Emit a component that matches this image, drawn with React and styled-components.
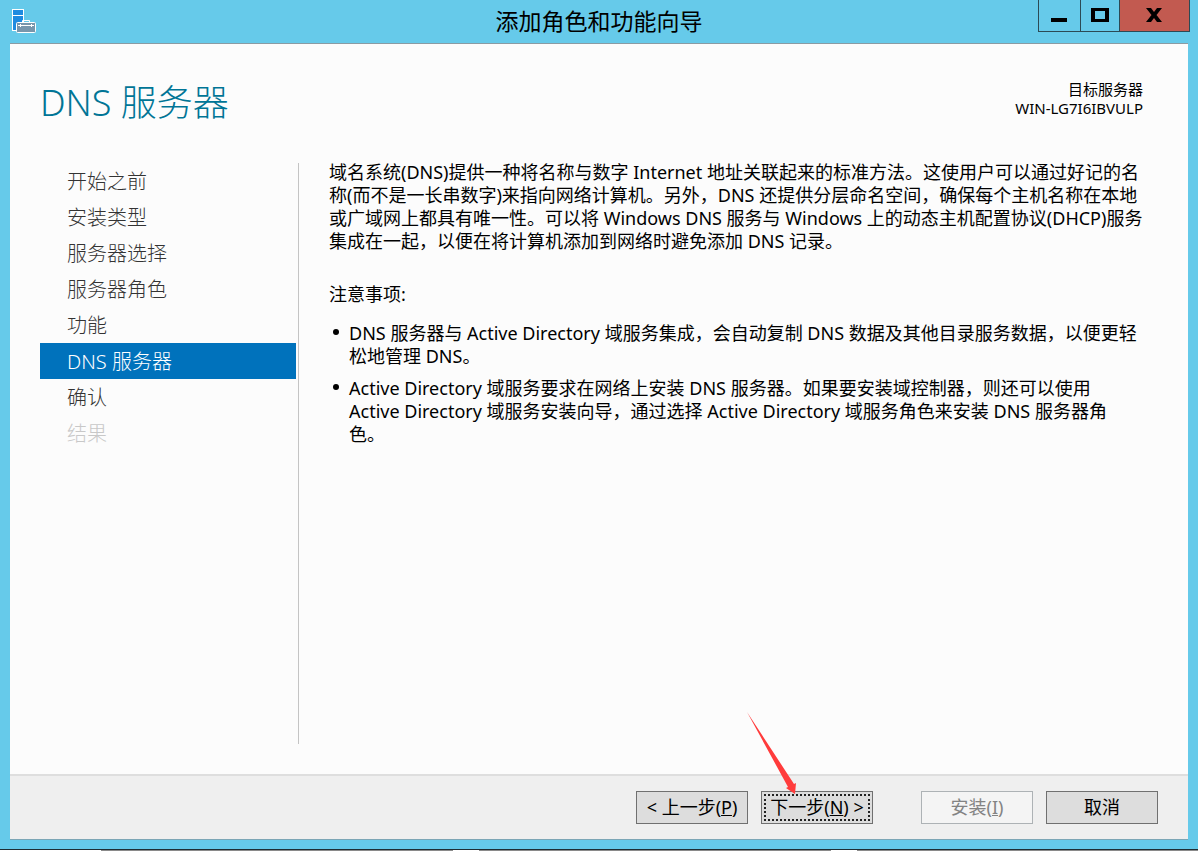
import React from "react";
import styled, { createGlobalStyle, css } from "styled-components";

const GlobalStyle = createGlobalStyle`
  * { box-sizing: border-box; }
  html, body, #root { height: 100%; margin: 0; }
  body {
    overflow: hidden;
    color: #000;
    font-family: "Noto Sans", "Noto Sans CJK SC", sans-serif;
    font-size: 18px;
  }
  button { font-family: inherit; }
  h1, h2, p, ul, ol { margin: 0; padding: 0; font-weight: 400; }
`;

const Desktop = styled.div`
  display: flex;
  flex-direction: column;
  height: 100vh;
`;

const Window = styled.div`
  flex: 1;
  min-height: 0;
  display: flex;
  flex-direction: column;
  padding: 0 10px 9px;
  background: #66caea;
  border-bottom: 1px solid #1e2d33;
`;

const TaskStrip = styled.div`
  display: flex;
  height: 2px;
  background: #fff;
`;

const StripPiece = styled.span`
  flex: ${(p) => p.$grow} 1 0;
  height: 1px;
  background: ${(p) => (p.$dark ? "#8a8a8a" : "#fff")};
`;

const TitleBar = styled.header`
  display: grid;
  grid-template-columns: 1fr auto 1fr;
  align-items: start;
  height: 43px;
`;

const AppIcon = styled.svg`
  width: 26px;
  height: 26px;
  margin-top: 8px;
`;

const Title = styled.h1`
  font-size: 23px;
  line-height: 42px;
`;

const Controls = styled.div`
  display: flex;
  justify-self: end;
  margin-right: -2px;
  border: 1px solid #2b4a55;
  border-top: 0;
`;

const ControlButton = styled.button`
  display: flex;
  align-items: center;
  justify-content: center;
  width: ${(p) => p.$width}px;
  height: 31px;
  padding: 0 1px 1px 0;
  border: 0;
  background: ${(p) => (p.$close ? "#c25a50" : "transparent")};
  & + & { border-left: 1px solid #2b4a55; }
`;

const Panel = styled.main`
  flex: 1;
  min-height: 0;
  display: flex;
  flex-direction: column;
  background: #fcfcfc;
  border-top: 1px solid #8a9ba3;
  border-bottom: 1px solid #7ba6b6;
`;

const PageHeader = styled.div`
  display: flex;
  justify-content: space-between;
  height: 117px;
  padding: 30px 45px 0 30px;
`;

const PageTitle = styled.h2`
  font-size: 36px;
  line-height: 58px;
  font-weight: 300;
  color: #007596;
`;

const Target = styled.p`
  padding-top: 6px;
  font-size: 15px;
  line-height: 19px;
  text-align: right;
`;

const Body = styled.div`
  flex: 1;
  min-height: 0;
  display: flex;
  padding: 0 30px;
`;

const Steps = styled.nav`
  width: 259px;
  margin: 2px 0 30px;
  padding-right: 2px;
  border-right: 1px solid #c4c4c4;
`;

const StepList = styled.ol`
  list-style: none;
`;

const Step = styled.li`
  height: 36px;
  padding-left: 27px;
  font-size: 20px;
  line-height: 38px;
  font-weight: 300;
  color: #333;
  ${(p) => p.$active && css`color: #fff; background: #0072bc;`}
  ${(p) => p.$disabled && css`color: #c8c8c8;`}
`;

const Content = styled.section`
  flex: 1;
  min-width: 0;
  padding-left: 30px;
  line-height: 23px;
`;

const Line = styled.span`
  display: block;
  white-space: nowrap;
`;

const NoteTitle = styled.p`
  margin: 30px 0 16px;
`;

const Notes = styled.ul`
  list-style: none;
`;

const Note = styled.li`
  display: flex;
  margin-bottom: 9px;
  &::before {
    content: "";
    flex: none;
    width: 6px;
    height: 6px;
    margin: 7px 10px 0 4px;
    border-radius: 50%;
    background: #000;
  }
`;

const Footer = styled.footer`
  display: flex;
  justify-content: flex-end;
  gap: 13px;
  height: 65px;
  padding: 15px 30px 0;
  background: #efefef;
  border-top: 2px solid #dedede;
`;

const Button = styled.button`
  width: 112px;
  height: 33px;
  padding: 0;
  border: 1px solid #707070;
  background: #ddd;
  color: #000;
  font-size: 18px;
  line-height: 31px;
  white-space: nowrap;
  ${(p) => p.$gap && css`margin-left: 35px;`}
  ${(p) => p.$focused && css`
    outline: 2px dotted #222;
    outline-offset: -5px;
  `}
  &:disabled {
    color: #838383;
    background: #f4f4f4;
    border-color: #adb2b5;
  }
`;

const Arrow = styled.svg`
  position: absolute;
  right: 401px;
  bottom: 58px;
  width: 52px;
  height: 84px;
  pointer-events: none;
`;

const steps = ["开始之前", "安装类型", "服务器选择", "服务器角色", "功能", "DNS 服务器", "确认", "结果"];

const intro = [
  "域名系统(DNS)提供一种将名称与数字 Internet 地址关联起来的标准方法。这使用户可以通过好记的名",
  "称(而不是一长串数字)来指向网络计算机。另外，DNS 还提供分层命名空间，确保每个主机名称在本地",
  "或广域网上都具有唯一性。可以将 Windows DNS 服务与 Windows 上的动态主机配置协议(DHCP)服务",
  "集成在一起，以便在将计算机添加到网络时避免添加 DNS 记录。",
];

const notes = [
  [
    "DNS 服务器与 Active Directory 域服务集成，会自动复制 DNS 数据及其他目录服务数据，以便更轻",
    "松地管理 DNS。",
  ],
  [
    "Active Directory 域服务要求在网络上安装 DNS 服务器。如果要安装域控制器，则还可以使用",
    "Active Directory 域服务安装向导，通过选择 Active Directory 域服务角色来安装 DNS 服务器角",
    "色。",
  ],
];

const Lines = ({ lines }) => lines.map((line) => <Line key={line}>{line}</Line>);

export default function App() {
  return (
    <Desktop lang="zh-CN">
      <GlobalStyle />
      <Window>
        <TitleBar>
          <AppIcon viewBox="0 0 26 26" aria-hidden="true">
            <rect x="2.5" y="1.5" width="11" height="21" fill="#1f8be0" stroke="#fff" />
            <path d="M2 7.500H14" stroke="#fff" />
            <path d="M12.500 14V12.500H19.500V14" fill="none" stroke="#fff" />
            <rect x="6.500" y="14.500" width="19" height="10" rx="1" fill="#7896ac" stroke="#fff" />
            <path d="M8 17.500H24M10.500 16V19M21.500 16V19" stroke="#fff" />
          </AppIcon>
          <Title>添加角色和功能向导</Title>
          <Controls>
            <ControlButton $width={41} aria-label="最小化">
              <svg width="16" height="14" shapeRendering="crispEdges"><rect y="10" width="16" height="4" /></svg>
            </ControlButton>
            <ControlButton $width={39} aria-label="最大化">
              <svg width="18" height="14" shapeRendering="crispEdges"><path fillRule="evenodd" d="M0 0H18V14H0ZM4 3V11H14V3Z" /></svg>
            </ControlButton>
            <ControlButton $width={70} $close aria-label="关闭">
              <svg width="16" height="14"><path d="M0 0H5L8 4L11 0H16L10.500 7L16 14H11L8 10L5 14H0L5.500 7Z" /></svg>
            </ControlButton>
          </Controls>
        </TitleBar>
        <Panel>
          <PageHeader>
            <PageTitle>DNS 服务器</PageTitle>
            <Target>目标服务器<br />WIN-LG7I6IBVULP</Target>
          </PageHeader>
          <Body>
            <Steps aria-label="向导步骤">
              <StepList>
                {steps.map((s, i) => (
                  <Step key={s} $active={i === 5} $disabled={i === 7} aria-current={i === 5 ? "step" : undefined}>{s}</Step>
                ))}
              </StepList>
            </Steps>
            <Content>
              <p><Lines lines={intro} /></p>
              <NoteTitle>注意事项:</NoteTitle>
              <Notes>
                {notes.map((n) => (
                  <Note key={n[0]}><div><Lines lines={n} /></div></Note>
                ))}
              </Notes>
            </Content>
          </Body>
          <Footer>
            <Button>&lt; 上一步(<u>P</u>)</Button>
            <Button $focused>下一步(<u>N</u>) &gt;</Button>
            <Button $gap disabled>安装(<u>I</u>)</Button>
            <Button>取消</Button>
          </Footer>
        </Panel>
      </Window>
      <TaskStrip>
        <StripPiece $grow={101} />
        <StripPiece $grow={352} $dark />
        <StripPiece $grow={26} />
        <StripPiece $grow={352} $dark />
        <StripPiece $grow={26} />
        <StripPiece $grow={341} $dark />
      </TaskStrip>
      <Arrow viewBox="0 0 52 84" aria-hidden="true">
        <path d="M2 2L49 74L51 73L50 84L41 78L43 77Z" fill="#ff3b3b" />
      </Arrow>
    </Desktop>
  );
}
